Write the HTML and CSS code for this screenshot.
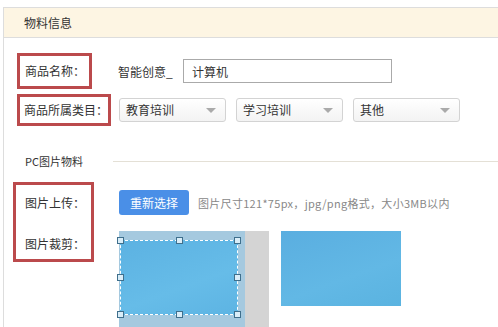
FILE: index.html
```html
<!DOCTYPE html>
<html lang="zh-CN">
<head>
    <meta charset="UTF-8">
    <meta name="viewport" content="width=device-width, initial-scale=1.0">
    <title>物料信息</title>
    <link rel="stylesheet" href="styles.css">
</head>
<body>
    <div class="panel">
        <div class="panel-head">物料信息</div>

        <div class="row row-name">
            <div class="mark mark-name">商品名称：</div>
            <span class="prefix">智能创意_</span>
            <input class="text-input" type="text" value="计算机">
        </div>

        <div class="row row-cat">
            <div class="mark mark-cat">商品所属类目：</div>
            <div class="selects">
                <div class="select">教育培训<span class="arrow"></span></div>
                <div class="select">学习培训<span class="arrow"></span></div>
                <div class="select">其他<span class="arrow"></span></div>
            </div>
        </div>

        <div class="section">
            <span class="section-title">PC图片物料</span>
            <span class="section-line"></span>
        </div>

        <div class="row row-pic">
            <div class="mark mark-pic">
                <div class="pic-label">图片上传：</div>
                <div class="pic-label">图片裁剪：</div>
            </div>
            <div class="pic-body">
                <div class="upload">
                    <button class="btn-blue">重新选择</button>
                    <span class="hint">图片尺寸121*75px，jpg/png格式，大小3MB以内</span>
                </div>
                <div class="crop-row">
                    <div class="crop">
                        <div class="crop-img">
                            <div class="crop-sel">
                                <span class="handle h-tl"></span>
                                <span class="handle h-tm"></span>
                                <span class="handle h-tr"></span>
                                <span class="handle h-ml"></span>
                                <span class="handle h-mr"></span>
                                <span class="handle h-bl"></span>
                                <span class="handle h-bm"></span>
                                <span class="handle h-br"></span>
                            </div>
                        </div>
                        <div class="crop-pad"></div>
                    </div>
                    <div class="preview"></div>
                </div>
            </div>
        </div>
    </div>
</body>
</html>
```

FILE: styles.css
```css
html, body {
    overflow: hidden;
}

body {
    margin: 0;
    background-color: #fff;
    font-family: 'Noto Sans CJK SC', 'DejaVu Sans', sans-serif;
    font-size: 12px;
    color: #333;
    height: 327px;
}

.panel {
    margin: 7px 0 0 3px;
    border-left: 1px solid #ddd;
    height: 320px;
    overflow: hidden;
}

.panel-head {
    height: 29px;
    line-height: 29px;
    background-color: #fdf5e3;
    border-top: 1px solid #ddd;
    border-bottom: 1px solid #ddd;
    padding-left: 20px;
    font-size: 12px;
}

.row {
    display: flex;
    align-items: center;
}

.mark {
    box-sizing: border-box;
    border: 3px solid #bb4a4c;
    margin-left: 13px;
    line-height: 16px;
    white-space: nowrap;
}

.row-name {
    margin-top: 15px;
}

.mark-name {
    width: 75px;
    height: 36px;
    padding-left: 5px;
    display: flex;
    align-items: center;
}

.prefix {
    margin-left: 26px;
    width: 65px;
}

.text-input {
    box-sizing: border-box;
    width: 209px;
    height: 24px;
    border: 1px solid #aaa;
    padding: 0 8px;
    font-family: inherit;
    font-size: 12px;
    color: #333;
    outline: none;
}

.row-cat {
    margin-top: 5px;
}

.mark-cat {
    width: 94px;
    height: 32px;
    padding-left: 4px;
    display: flex;
    align-items: center;
}

.selects {
    display: flex;
    gap: 10px;
    margin-left: 8px;
}

.select {
    box-sizing: border-box;
    position: relative;
    width: 107px;
    height: 24px;
    line-height: 22px;
    padding-left: 6px;
    border: 1px solid #d3d3d3;
    border-radius: 3px;
    background: linear-gradient(#fff, #f3f3f3);
}

.arrow {
    position: absolute;
    right: 9px;
    top: 9px;
    border-left: 5px solid transparent;
    border-right: 5px solid transparent;
    border-top: 5px solid #aaa;
}

.section {
    display: flex;
    align-items: center;
    margin-top: 26px;
    height: 18px;
}

.section-title {
    margin-left: 21px;
    font-size: 11px;
}

.section-line {
    flex: 1;
    height: 1px;
    margin-left: 30px;
    background-color: #e4e0d6;
}

.row-pic {
    align-items: flex-start;
    margin-top: 12px;
}

.mark-pic {
    margin-left: 9px;
    width: 81px;
    height: 80px;
    padding: 10px 0 0 9px;
}

.pic-label + .pic-label {
    margin-top: 25px;
}

.pic-body {
    margin: 8px 0 0 25px;
}

.upload {
    display: flex;
    align-items: center;
}

.btn-blue {
    width: 70px;
    height: 25px;
    border: none;
    border-radius: 3px;
    background-color: #4a8fe7;
    color: #fff;
    font-family: inherit;
    font-size: 12px;
    padding: 0;
}

.hint {
    margin-left: 9px;
    color: #888;
    font-size: 11px;
    letter-spacing: 0.3px;
}

.crop-row {
    display: flex;
    margin-top: 16px;
}

.crop {
    display: flex;
}

.crop-img {
    position: relative;
    width: 126px;
    height: 97px;
    background-color: #a5c9df;
}

.crop-sel {
    position: absolute;
    left: 1px;
    top: 9px;
    width: 116px;
    height: 73px;
    border: 1px dashed #fff;
    background: linear-gradient(160deg, #5cb2e2, #66bce8 60%, #5db4e3);
}

.crop-pad {
    width: 24px;
    height: 97px;
    background-color: #d4d4d4;
}

.handle {
    position: absolute;
    box-sizing: border-box;
    width: 7px;
    height: 7px;
    border: 1px solid #3f6f8c;
    background-color: #d9edf8;
}

.h-tl { left: -4px; top: -4px; }
.h-tm { left: 55px; top: -4px; }
.h-tr { right: -4px; top: -4px; }
.h-ml { left: -4px; top: 33px; }
.h-mr { right: -4px; top: 33px; }
.h-bl { left: -4px; bottom: -4px; }
.h-bm { left: 55px; bottom: -4px; }
.h-br { right: -4px; bottom: -4px; }

.preview {
    margin-left: 12px;
    width: 120px;
    height: 75px;
    background: linear-gradient(160deg, #5aaee0, #62b8e5 60%, #5ab3e0);
}
```
